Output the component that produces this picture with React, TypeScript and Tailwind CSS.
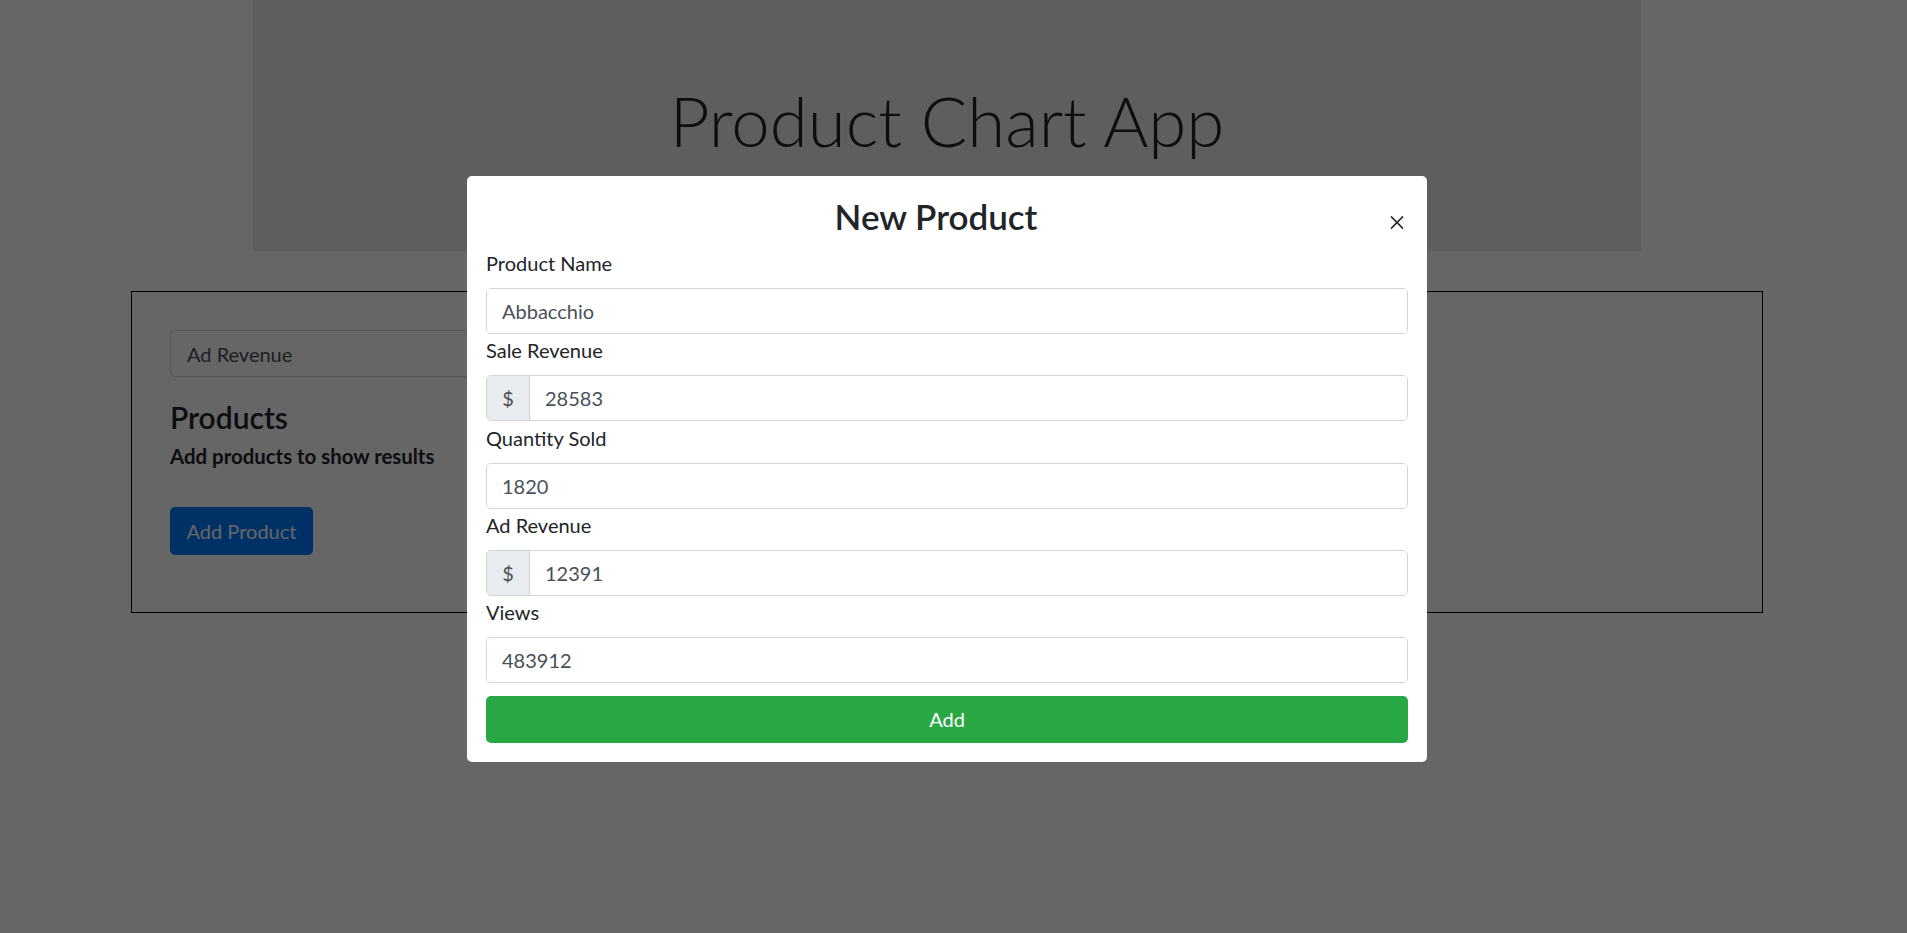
const font = "font-['Lato','Liberation_Sans',sans-serif]";

function Field({ label, value, prefix }: { label: string; value: string; prefix?: boolean }) {
  return (
    <div className="mb-[1.3px]">
      <label className="block h-[30px] leading-[30px] mb-[10px] text-[20px] text-[#212529]">{label}</label>
      <div className="flex h-[46px] rounded-[5px] border border-[#ced4da] overflow-hidden">
        {prefix && (
          <span className="w-[43px] shrink-0 flex items-center justify-center bg-[#e9ecef] border-r border-[#ced4da] text-[20px] text-[#495057]">
            $
          </span>
        )}
        <input
          readOnly
          value={value}
          className="flex-1 min-w-0 px-[15px] text-[20px] text-[#495057] outline-none bg-white"
        />
      </div>
    </div>
  );
}

export default function App() {
  return (
    <div className={`relative min-h-[933px] bg-white ${font}`}>
      <div className="ml-[253px] w-[1388px] h-[251px] bg-[#e9ecef] pt-[79px]">
        <h1 className="text-center text-[69px] leading-[84px] font-light text-[#212529]">Product Chart App</h1>
      </div>

      <div className="ml-[131px] mt-[40px] w-[1632px] h-[322px] border border-black pt-[38px] pl-[38px]">
        <div className="w-[600px] h-[47px] rounded-[5px] border border-[#ced4da] flex items-center px-[16px] text-[20px] text-[#495057]">
          Ad Revenue
        </div>
        <h4 className="mt-[23px] text-[30px] leading-[34px] font-semibold text-[#212529]">Products</h4>
        <p className="mt-[7px] text-[20.4px] leading-[30px] font-bold text-[#212529]">Add products to show results</p>
        <button className="mt-[36px] w-[143px] h-[48px] rounded-[5px] bg-[#007bff] text-white text-[20px]">
          Add Product
        </button>
      </div>

      <div className="fixed inset-0 bg-black/60" />

      <div className="fixed left-[467px] top-[176px] w-[960px] bg-white rounded-[5px] px-[19px] pt-[22px] pb-[19px]">
        <div className="flex mb-[13px]">
          <h3 className="flex-1 text-center text-[35px] leading-[37px] font-semibold text-[#212529]">New Product</h3>
          <div className="w-[22px] flex justify-center pt-[18px]">
            <svg width="14" height="13" viewBox="0 0 14 13" className="text-[#212529]">
              <path d="M1 0.5L13 12.5M13 0.5L1 12.5" stroke="currentColor" strokeWidth="1.7" fill="none" />
            </svg>
          </div>
        </div>
        <Field label="Product Name" value="Abbacchio" />
        <Field label="Sale Revenue" value="28583" prefix />
        <Field label="Quantity Sold" value="1820" />
        <Field label="Ad Revenue" value="12391" prefix />
        <Field label="Views" value="483912" />
        <button className="mt-[11.5px] w-full h-[47px] rounded-[5px] bg-[#28a745] text-white text-[20px]">Add</button>
      </div>
    </div>
  );
}
